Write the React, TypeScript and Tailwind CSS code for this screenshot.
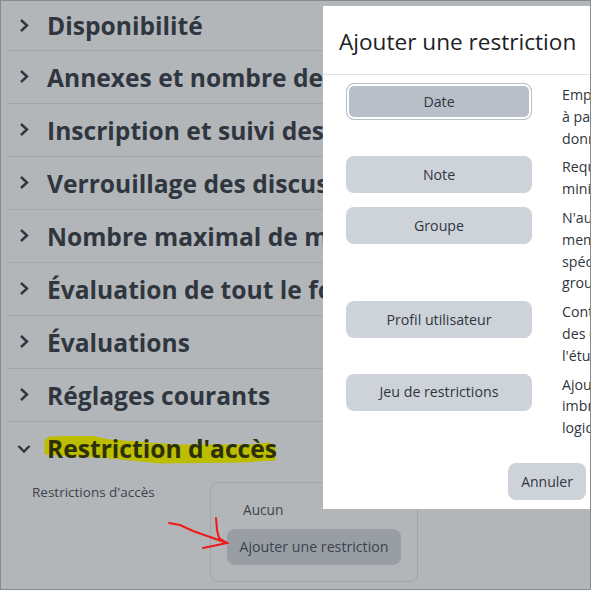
const sections = [
  "Disponibilité",
  "Annexes et nombre de mots",
  "Inscription et suivi des messages",
  "Verrouillage des discussions",
  "Nombre maximal de messages",
  "Évaluation de tout le forum",
  "Évaluations",
  "Réglages courants",
];

const restrictions = [
  { label: "Date", lines: ["Empêcher l'accès jusqu'à", "à partir d'une date", "données"], active: true },
  { label: "Note", lines: ["Requiert une note", "minimale"] },
  { label: "Groupe", lines: ["N'autoriser que les", "membres d'un groupe", "spécifié", "groupes"] },
  { label: "Profil utilisateur", lines: ["Contrôle de l'accès", "des champs du profil", "l'étudiant"] },
  { label: "Jeu de restrictions", lines: ["Ajouter un jeu", "imbriqué", "logique"] },
];

function Chevron({ open }: { open?: boolean }) {
  return (
    <svg width="14" height="14" viewBox="0 0 14 14" fill="none" stroke="#2f3640" strokeWidth="2.4" className="shrink-0">
      <path d={open ? "M1.5 4 7 9.5 12.5 4" : "M4 1 10 6.5 4 12"} />
    </svg>
  );
}

export default function App() {
  return (
    <div
      className="relative w-[591px] h-[590px] overflow-hidden border border-[#8a8a8a] bg-[#b3b6b9] text-[#2f3640]"
      style={{ fontFamily: '"Open Sans", "Noto Sans", sans-serif' }}
    >
      {/* Accordion */}
      <div className="pl-[7px]">
        {sections.map((title, i) => (
          <div
            key={title}
            className={`flex items-center border-b border-[#a4a7aa] pl-[9px] ${i === 0 ? "h-[50px]" : "h-[53px]"}`}
          >
            <Chevron />
            <h3 className="ml-[16px] mt-[2px] whitespace-nowrap text-[24.6px] font-bold">{title}</h3>
          </div>
        ))}

        <div className="flex h-[53px] items-center pl-[9px]">
          <Chevron open />
          <h3 className="relative z-10 ml-[16px] mt-[2px] whitespace-nowrap text-[24.6px] font-bold text-[#2c3008]">Restriction d'accès</h3>
        </div>

        <div className="flex pl-[24px] pt-[7px]">
          <span className="w-[178px] text-[13.5px] text-[#3c434c]">Restrictions d'accès</span>
          <div className="h-[100px] w-[208px] rounded-lg border border-[#a3a6a9] pl-[16px] pt-[15px]">
            <p className="pl-[16px] text-[13.7px] leading-[24px] text-[#3c434c]">Aucun</p>
            <button className="mt-[7px] h-[36px] w-[174px] rounded-lg bg-[#999ea5] text-[14.2px] whitespace-nowrap text-[#3c434c]">
              Ajouter une restriction
            </button>
          </div>
        </div>
      </div>

      {/* Highlighter stroke */}
      <svg className="absolute left-[43px] top-[435px]" width="234" height="30" viewBox="0 0 234 30">
        <path
          d="M1 4 L6 1 L46 0 L66 4 L133 9 L206 9 L226 7 L231 12 L231 24 L199 26 L116 27 L66 22 L33 20 L1 18 Z"
          fill="#bdbd00"
          stroke="#bdbd00"
          strokeLinejoin="round"
        />
      </svg>

      {/* Red arrow */}
      <svg className="absolute left-[165px] top-[513px]" width="70" height="42" viewBox="0 0 70 42" fill="none" stroke="#f01818" strokeWidth="2" strokeLinecap="round">
        <path d="M3 9 L14 11 L27 17 L61 29" />
        <path d="M50 4 L51 16 L53 24 L61 29 L37 34" />
      </svg>

      {/* Modal */}
      <div className="absolute left-[322px] top-[5px] flex h-[503px] w-[300px] flex-col bg-white">
        <div className="flex h-[69px] shrink-0 items-center border-b border-[#dee2e6] pl-[16px]">
          <h5 className="mt-[3px] whitespace-nowrap text-[22.6px] text-[#1d2125]">Ajouter une restriction</h5>
        </div>
        <div className="flex flex-col gap-[7px] pl-[23px] pt-[9px]">
          {restrictions.map((r) => (
            <div key={r.label} className="flex">
              <button
                className={`w-[186px] shrink-0 rounded-lg text-[14.2px] text-[#2f3640] ${
                  r.active
                    ? "-mt-[1px] h-[37px] border border-[#b8bfc8] bg-[#b8bfc8] shadow-[inset_0_0_0_2px_white]"
                    : "h-[37px] bg-[#ced3da]"
                }`}
              >
                {r.label}
              </button>
              <div className="ml-[30px] text-[14.2px] leading-[21.8px] whitespace-nowrap text-[#2f3640]">
                {r.lines.map((line) => (
                  <div key={line}>{line}</div>
                ))}
              </div>
            </div>
          ))}
        </div>
        <div className="absolute left-[185px] top-[457px]">
          <button className="h-[37px] w-[78px] rounded-lg bg-[#ced3da] text-[14px] text-[#2f3640]">Annuler</button>
        </div>
      </div>
    </div>
  );
}
